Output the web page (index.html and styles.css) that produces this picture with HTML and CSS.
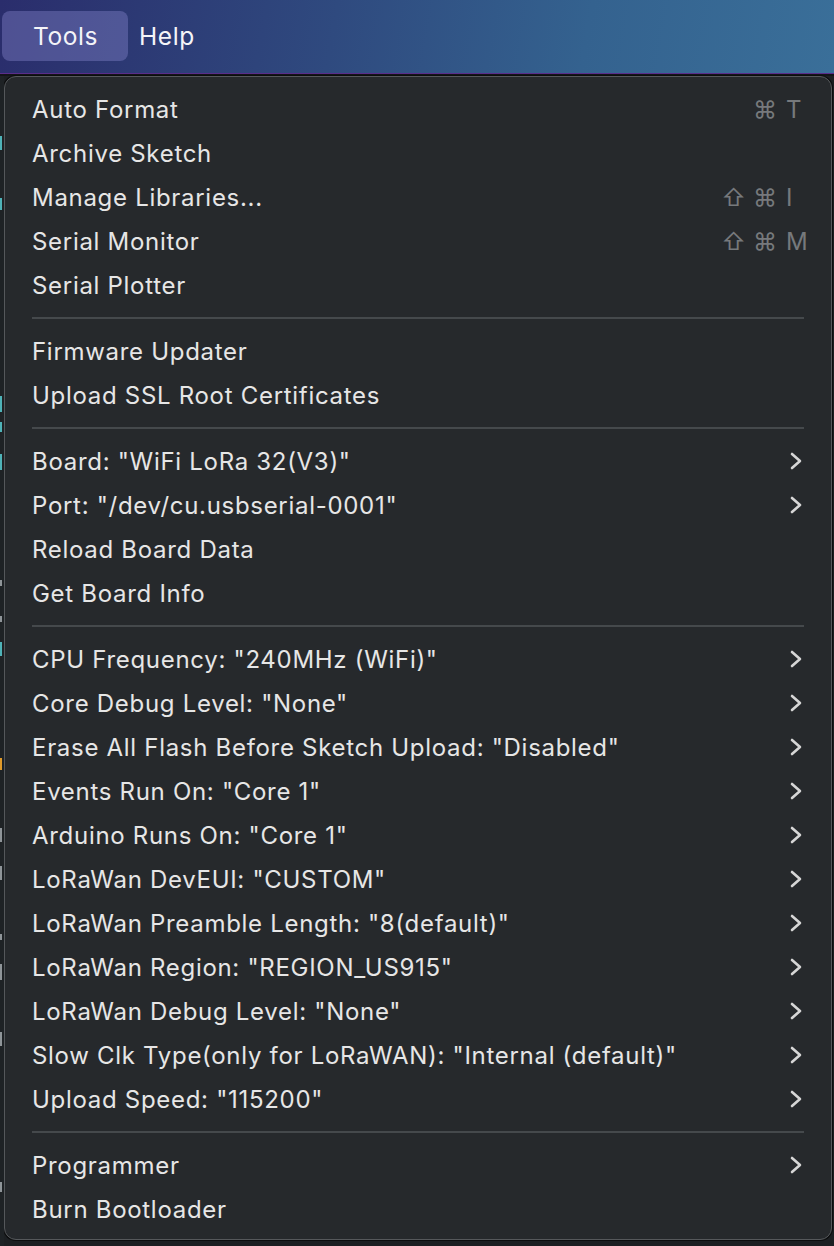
FILE: index.html
```html
<!DOCTYPE html>
<html>
<head>
<meta charset="utf-8">
<link rel="stylesheet" href="styles.css">
</head>
<body>
<header class="menubar">
  <div class="mb-item active">Tools</div>
  <div class="mb-item">Help</div>
</header>
<div class="stage">
  <div class="editor-edge">
    <i class="g c1" style="top:60px;height:14px"></i>
    <i class="g c1" style="top:122px;height:12px"></i>
    <i class="g c1" style="top:320px;height:16px"></i>
    <i class="g c1" style="top:346px;height:10px"></i>
    <i class="g c1" style="top:378px;height:16px"></i>
    <i class="g c2" style="top:504px;height:6px"></i>
    <i class="g c2" style="top:540px;height:6px"></i>
    <i class="g c1" style="top:566px;height:14px"></i>
    <i class="g c3" style="top:682px;height:12px"></i>
    <i class="g c2" style="top:752px;height:14px"></i>
    <i class="g c2" style="top:790px;height:14px"></i>
    <i class="g c2" style="top:858px;height:6px"></i>
    <i class="g c2" style="top:888px;height:16px"></i>
    <i class="g c2" style="top:956px;height:14px"></i>
    <i class="g c2" style="top:1106px;height:10px"></i>
  </div>
  <nav class="menu">
    <div class="row"><span class="label">Auto Format</span><span class="sc"><span class="mod">⌘</span><span class="key">T</span></span></div>
    <div class="row"><span class="label">Archive Sketch</span></div>
    <div class="row"><span class="label">Manage Libraries...</span><span class="sc"><span class="mod">⇧</span><span class="mod">⌘</span><span class="key">I</span></span></div>
    <div class="row"><span class="label">Serial Monitor</span><span class="sc"><span class="mod">⇧</span><span class="mod">⌘</span><span class="key">M</span></span></div>
    <div class="row"><span class="label">Serial Plotter</span></div>
    <div class="sep"></div>
    <div class="row"><span class="label">Firmware Updater</span></div>
    <div class="row"><span class="label">Upload SSL Root Certificates</span></div>
    <div class="sep"></div>
    <div class="row sub"><span class="label">Board: "WiFi LoRa 32(V3)"</span><svg class="chev" viewBox="0 0 12 18"><path d="M2 2 L10 9 L2 16"/></svg></div>
    <div class="row sub"><span class="label">Port: "/dev/cu.usbserial-0001"</span><svg class="chev" viewBox="0 0 12 18"><path d="M2 2 L10 9 L2 16"/></svg></div>
    <div class="row"><span class="label">Reload Board Data</span></div>
    <div class="row"><span class="label">Get Board Info</span></div>
    <div class="sep"></div>
    <div class="row sub"><span class="label">CPU Frequency: "240MHz (WiFi)"</span><svg class="chev" viewBox="0 0 12 18"><path d="M2 2 L10 9 L2 16"/></svg></div>
    <div class="row sub"><span class="label">Core Debug Level: "None"</span><svg class="chev" viewBox="0 0 12 18"><path d="M2 2 L10 9 L2 16"/></svg></div>
    <div class="row sub"><span class="label">Erase All Flash Before Sketch Upload: "Disabled"</span><svg class="chev" viewBox="0 0 12 18"><path d="M2 2 L10 9 L2 16"/></svg></div>
    <div class="row sub"><span class="label">Events Run On: "Core 1"</span><svg class="chev" viewBox="0 0 12 18"><path d="M2 2 L10 9 L2 16"/></svg></div>
    <div class="row sub"><span class="label">Arduino Runs On: "Core 1"</span><svg class="chev" viewBox="0 0 12 18"><path d="M2 2 L10 9 L2 16"/></svg></div>
    <div class="row sub"><span class="label">LoRaWan DevEUI: "CUSTOM"</span><svg class="chev" viewBox="0 0 12 18"><path d="M2 2 L10 9 L2 16"/></svg></div>
    <div class="row sub"><span class="label">LoRaWan Preamble Length: "8(default)"</span><svg class="chev" viewBox="0 0 12 18"><path d="M2 2 L10 9 L2 16"/></svg></div>
    <div class="row sub"><span class="label">LoRaWan Region: "REGION_US915"</span><svg class="chev" viewBox="0 0 12 18"><path d="M2 2 L10 9 L2 16"/></svg></div>
    <div class="row sub"><span class="label">LoRaWan Debug Level: "None"</span><svg class="chev" viewBox="0 0 12 18"><path d="M2 2 L10 9 L2 16"/></svg></div>
    <div class="row sub"><span class="label">Slow Clk Type(only for LoRaWAN): "Internal (default)"</span><svg class="chev" viewBox="0 0 12 18"><path d="M2 2 L10 9 L2 16"/></svg></div>
    <div class="row sub"><span class="label">Upload Speed: "115200"</span><svg class="chev" viewBox="0 0 12 18"><path d="M2 2 L10 9 L2 16"/></svg></div>
    <div class="sep"></div>
    <div class="row sub"><span class="label">Programmer</span><svg class="chev" viewBox="0 0 12 18"><path d="M2 2 L10 9 L2 16"/></svg></div>
    <div class="row"><span class="label">Burn Bootloader</span></div>
  </nav>
</div>
</body>
</html>
```
FILE: styles.css
```css
* { box-sizing: border-box; }
html, body {
  margin: 0;
  padding: 0;
  width: 834px;
  height: 1246px;
  overflow: hidden;
  background: #1c1f22;
  font-family: Inter, "Noto Sans", "Liberation Sans", sans-serif;
  -webkit-font-smoothing: antialiased;
}
.menubar {
  height: 76px;
  display: flex;
  align-items: center;
  padding: 0 0 2px 2px;
  background: linear-gradient(100deg, #2a2d6c 0%, #2f4a7f 40%, #34628f 70%, #3a6f99 100%);
  border-bottom: 2px solid #141418;
  box-shadow: inset 0 -1px 0 #5a2d8a;
}
.mb-item {
  color: #f4f4f8;
  font-size: 24.5px;
  letter-spacing: 0.6px;
  height: 50px;
  display: flex;
  align-items: center;
  padding: 0 10px 0 31px;
  border-radius: 8px;
}
.mb-item.active {
  background: rgba(140, 140, 210, 0.38);
  width: 126px;
}
.mb-item + .mb-item { padding-left: 11px; }
.stage {
  display: flex;
  height: 1170px;
}
.editor-edge {
  position: relative;
  width: 4px;
  background: #1e2225;
  overflow: hidden;
}
.g {
  position: absolute;
  left: 0;
  width: 2px;
  display: block;
}
.c1 { background: #4fb3b8; }
.c2 { background: #8f9599; }
.c3 { background: #e09a2a; }
.menu {
  flex: 1;
  margin: 0 2px 6px 0;
  background: #26292c;
  border: 1px solid #55585b;
  border-radius: 12px;
  box-shadow: 0 0 0 1px #0c0d0e;
  padding: 10px 27px 8px 27px;
  display: flex;
  flex-direction: column;
}
.row {
  height: 44px;
  display: flex;
  align-items: center;
  justify-content: space-between;
  color: #e6e6e6;
  font-size: 24px;
  letter-spacing: 0.7px;
}
.sep {
  height: 22px;
  display: flex;
  align-items: center;
}
.sep::before {
  content: "";
  display: block;
  width: 100%;
  height: 2px;
  background: #45494c;
}
.sc {
  display: flex;
  align-items: center;
  color: #76797c;
  font-size: 24px;
  letter-spacing: 0;
}
.mod {
  margin-left: 7px;
}
.key {
  width: 18px;
  margin-left: 9px;
  text-align: left;
  white-space: nowrap;
}
.chev {
  width: 12px;
  height: 18px;
  margin-right: 2px;
  fill: none;
  stroke: #d6d6d6;
  stroke-width: 2.6;
  stroke-linecap: round;
  stroke-linejoin: round;
}
```
